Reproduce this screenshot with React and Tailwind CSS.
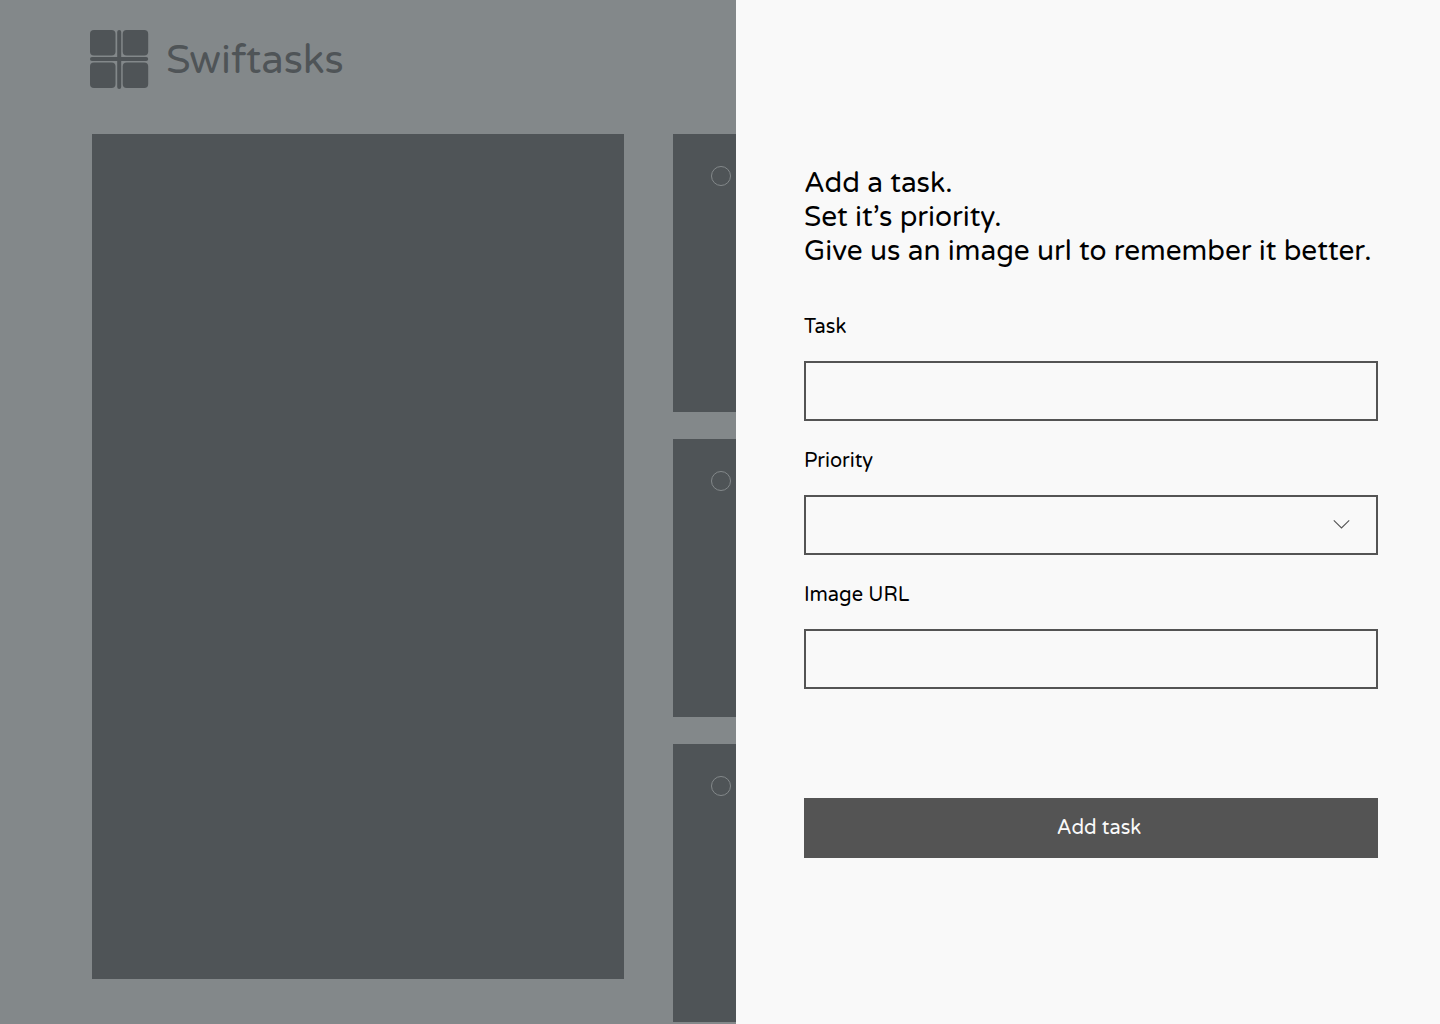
const tasks = [1, 2, 3];

function Logo() {
  return (
    <svg
      width="60"
      height="60"
      viewBox="0 0 60 60"
      className="shrink-0 fill-[#4f5457]"
      aria-hidden="true"
    >
      <rect x="0" y="0" width="25.5" height="25.5" rx="4" />
      <rect x="32.7" y="0" width="25.5" height="25.5" rx="4" />
      <rect x="0" y="32.4" width="25.5" height="25.5" rx="4" />
      <rect x="32.7" y="32.4" width="25.5" height="25.5" rx="4" />
      <rect x="27.2" y="0" width="4" height="59" rx="2" />
      <rect x="0" y="27" width="58.2" height="4" rx="2" />
    </svg>
  );
}

function Board() {
  return (
    <div className="flex min-h-screen flex-col bg-[#83888a] pl-[90px] pt-[30px]">
      <header className="flex h-[60px] items-center gap-4 text-[#4f5457]">
        <Logo />
        <span className="text-[40px] leading-[60px]">Swiftasks</span>
      </header>
      <main className="mt-11 grid grid-cols-[532px_1fr] items-start gap-[49px] pl-[2px] pr-[92px]">
        <section className="h-[845px] bg-[#4f5457]" aria-label="Preview" />
        <ul className="flex flex-col gap-[27px]">
          {tasks.map((id) => (
            <li key={id} className="h-[278px] bg-[#4f5457] px-[38px] py-8">
              <input
                type="checkbox"
                aria-label={`Complete task ${id}`}
                className="block size-5 appearance-none rounded-full border border-[#83888a]"
              />
            </li>
          ))}
        </ul>
      </main>
    </div>
  );
}

const label = "mb-[22px] block text-[20px] leading-6";
const field =
  "block h-[60px] w-full appearance-none rounded-none border-2 border-[#545454] bg-transparent px-4 text-[20px]";

function TaskForm() {
  return (
    <form className="w-full" onSubmit={(e) => e.preventDefault()}>
      <h1 className="mb-[47px] text-[28px] leading-[34px]">
        Add a task.
        <br />
        Set it’s priority.
        <br />
        Give us an image url to remember it better.
      </h1>
      <div className="flex flex-col gap-7">
        <div>
          <label htmlFor="task" className={label}>Task</label>
          <input id="task" type="text" className={field} />
        </div>
        <div>
          <label htmlFor="priority" className={label}>Priority</label>
          <div className="relative">
            <select id="priority" defaultValue="" className={field}>
              <option value=""></option>
            </select>
            <svg
              width="18"
              height="12"
              viewBox="0 0 18 12"
              fill="none"
              stroke="#545454"
              strokeWidth="1.1"
              className="pointer-events-none absolute right-7 top-6"
              aria-hidden="true"
            >
              <path d="M1.8 1.4 9.5 9 17.2 1.4" />
            </svg>
          </div>
        </div>
        <div>
          <label htmlFor="image-url" className={label}>Image URL</label>
          <input id="image-url" type="text" className={field} />
        </div>
      </div>
      <button
        type="submit"
        className="mt-[109px] block h-[60px] w-full bg-[#545454] pl-4 text-[20px] leading-6 text-[#f9f9f9]"
      >
        Add task
      </button>
    </form>
  );
}

export default function App() {
  return (
    <div className="relative min-h-screen overflow-hidden font-['Varela_Round','Noto_Sans',sans-serif]">
      <Board />
      <aside className="absolute inset-y-0 right-0 flex w-full max-w-[704px] items-center bg-[#f9f9f9] pl-[68px] pr-[62px] text-black">
        <TaskForm />
      </aside>
    </div>
  );
}
